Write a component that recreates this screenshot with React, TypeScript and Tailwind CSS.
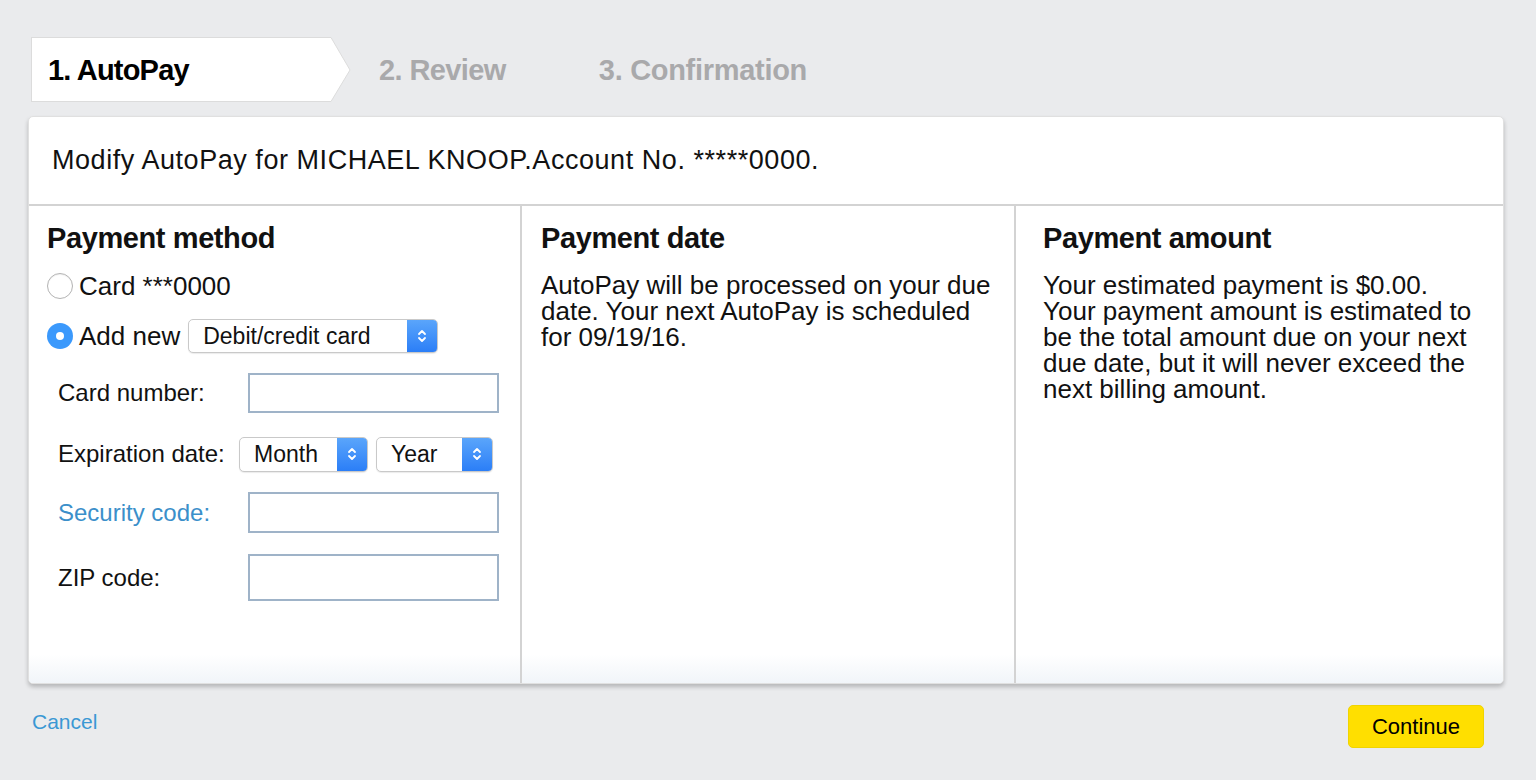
import React from 'react';

const Chevrons = () => (
  <svg width="12" height="18" viewBox="0 0 12 18" fill="none">
    <path d="M3 7 L6 4 L9 7" stroke="white" strokeWidth="1.8" strokeLinecap="round" strokeLinejoin="round" />
    <path d="M3 11 L6 14 L9 11" stroke="white" strokeWidth="1.8" strokeLinecap="round" strokeLinejoin="round" />
  </svg>
);

const MacSelect = ({ label, width, height }: { label: string; width: string; height: string }) => (
  <div className={`flex ${width} ${height} rounded-[5px] border border-[#c9c9c9] bg-white overflow-hidden shadow-[0_1px_1px_rgba(0,0,0,0.08)]`}>
    <div className="flex-1 flex items-center pl-[14px] text-[23px] text-[#111]">{label}</div>
    <div className="w-[30px] flex items-center justify-center bg-linear-to-b from-[#5aa5fb] to-[#2b7ef7]">
      <Chevrons />
    </div>
  </div>
);

const App = () => {
  return (
    <div className="w-[1536px] h-[780px] bg-[#eaebed] pt-[37px] pl-[28px] pr-[32px] font-['Liberation_Sans',Arial,sans-serif] text-[#111]">
      {/* steps */}
      <div className="flex items-center h-[65px] ml-[3px]">
        <div className="flex h-[65px]">
          <div className="w-[300px] h-[65px] bg-white border-y border-l border-[#dcdcdc] flex items-center pl-[16px] pt-[2px] text-[29px] font-bold tracking-[-0.8px] text-black">
            1. AutoPay
          </div>
          <svg width="21" height="65" viewBox="0 0 21 65" className="-ml-px">
            <polygon points="0,0.5 1,0.5 20,33 1,64.5 0,64.5" fill="white" />
            <polyline points="0,0.5 1,0.5 20,33 1,64.5 0,64.5" fill="none" stroke="#dcdcdc" strokeWidth="1" />
          </svg>
        </div>
        <div className="ml-[28px] pt-[2px] text-[29px] font-bold tracking-[-0.6px] text-[#a9a9ab]">2. Review</div>
        <div className="ml-[93px] pt-[2px] text-[29px] font-bold tracking-[-0.3px] text-[#a9a9ab]">3. Confirmation</div>
      </div>

      {/* card */}
      <div className="mt-[14px] bg-white rounded-[5px] border border-[#e0e0e0] shadow-[0_3px_4px_rgba(0,0,0,0.22)] overflow-hidden">
        <div className="h-[89px] flex items-center pl-[23px] text-[27px] tracking-[0.55px] border-b-2 border-[#d3d3d3]">
          Modify AutoPay for MICHAEL KNOOP.Account No. *****0000.
        </div>
        <div className="grid grid-cols-[493px_494px_1fr] h-[477px] bg-linear-to-b from-white from-[94%] to-[#f1f5f9]">
          {/* payment method */}
          <div className="border-r-2 border-[#d3d3d3] pl-[18px] pt-[17px]">
            <div className="text-[29px] font-bold tracking-[-0.4px] leading-[30px]">Payment method</div>
            <div className="flex items-center mt-[18px] h-[30px]">
              <div className="w-[26px] h-[26px] rounded-full border border-[#b3b3b3] bg-white shadow-[inset_0_1px_1px_rgba(0,0,0,0.06)]" />
              <span className="ml-[6px] text-[26px]">Card ***0000</span>
            </div>
            <div className="flex items-center mt-[18px] h-[34px]">
              <div className="w-[26px] h-[26px] rounded-full bg-[#3b99fc] flex items-center justify-center">
                <div className="w-[8px] h-[8px] rounded-full bg-white" />
              </div>
              <span className="ml-[6px] text-[26px]">Add new</span>
              <div className="ml-[8px]">
                <MacSelect label="Debit/credit card" width="w-[250px]" height="h-[34px]" />
              </div>
            </div>
            <div className="pl-[11px] mt-[20px] flex flex-col text-[24px]">
              <div className="flex items-center">
                <span className="w-[190px]">Card number:</span>
                <div className="w-[251px] h-[40px] border-2 border-[#9fb3c8] bg-white" />
              </div>
              <div className="flex items-center mt-[23px]">
                <span className="w-[181px]">Expiration date:</span>
                <MacSelect label="Month" width="w-[129px]" height="h-[35px]" />
                <div className="ml-[8px]">
                  <MacSelect label="Year" width="w-[117px]" height="h-[35px]" />
                </div>
              </div>
              <div className="flex items-center mt-[20px]">
                <span className="w-[190px] text-[#3b8fca]">Security code:</span>
                <div className="w-[251px] h-[41px] border-2 border-[#9fb3c8] bg-white" />
              </div>
              <div className="flex items-center mt-[21px]">
                <span className="w-[190px]">ZIP code:</span>
                <div className="w-[251px] h-[47px] border-2 border-[#9fb3c8] bg-white" />
              </div>
            </div>
          </div>

          {/* payment date */}
          <div className="border-r-2 border-[#d3d3d3] pl-[19px] pr-[20px] pt-[17px]">
            <div className="text-[29px] font-bold tracking-[-0.4px] leading-[30px]">Payment date</div>
            <p className="mt-[19px] text-[26px] leading-[26px]">
              AutoPay will be processed on your due date. Your next AutoPay is scheduled for 09/19/16.
            </p>
          </div>

          {/* payment amount */}
          <div className="pl-[27px] pr-[20px] pt-[17px]">
            <div className="text-[29px] font-bold tracking-[-0.4px] leading-[30px]">Payment amount</div>
            <div className="mt-[19px] text-[26px] leading-[26px]">
              <p>Your estimated payment is $0.00.</p>
              <p>Your payment amount is estimated to be the total amount due on your next due date, but it will never exceed the next billing amount.</p>
            </div>
          </div>
        </div>
      </div>

      {/* footer */}
      <div className="flex items-center justify-between mt-[21px] pr-[20px]">
        <a href="#" className="ml-[4px] -mt-[10px] text-[21px] text-[#3a98d4]">Cancel</a>
        <button type="button" className="w-[136px] h-[43px] rounded-[5px] bg-[#ffdf00] border border-[#f0d400] text-[22px] text-black">
          Continue
        </button>
      </div>
    </div>
  );
};

export default App;
